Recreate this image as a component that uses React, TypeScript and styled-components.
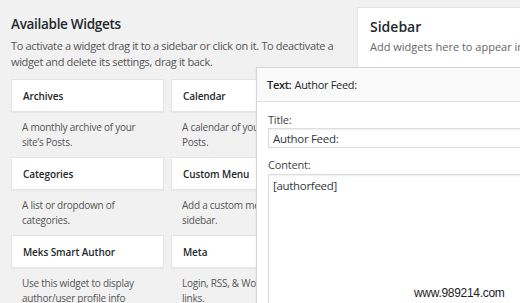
import React from "react";
import styled, { createGlobalStyle } from "styled-components";

const GlobalStyle = createGlobalStyle`
  html, body {
    margin: 0;
    padding: 0;
    background: #f1f1f1;
    font-family: "Open Sans", "Noto Sans", sans-serif;
    color: #444;
  }
  body {
    width: 520px;
    height: 303px;
    overflow: hidden;
  }
`;

const widgets = [
  { title: "Archives", desc: "A monthly archive of your site’s Posts." },
  { title: "Calendar", desc: "A calendar of your site’s Posts." },
  { title: "Categories", desc: "A list or dropdown of categories." },
  { title: "Custom Menu", desc: "Add a custom menu to your sidebar." },
  {
    title: "Meks Smart Author",
    desc: "Use this widget to display author/user profile info",
  },
  { title: "Meta", desc: "Login, RSS, & WordPress.org links." },
];

const App = () => {
  return (
    <>
      <GlobalStyle />
      <Page>
        <Available>
          <Heading>Available Widgets</Heading>
          <Intro>
            To activate a widget drag it to a sidebar or click on it. To
            deactivate a widget and delete its settings, drag it back.
          </Intro>
          <WidgetGrid>
            {widgets.map((w) => (
              <WidgetItem key={w.title}>
                <WidgetCard>{w.title}</WidgetCard>
                <WidgetDesc>{w.desc}</WidgetDesc>
              </WidgetItem>
            ))}
          </WidgetGrid>
        </Available>
        <SidebarPanel>
          <SidebarTitle>Sidebar</SidebarTitle>
          <SidebarDesc>
            Add widgets here to appear in your theme’s sidebar.
          </SidebarDesc>
        </SidebarPanel>

        <OpenWidget>
          <OpenHeader>
            <strong>Text:</strong> Author Feed:
          </OpenHeader>
          <OpenBody>
            <FieldLabel>Title:</FieldLabel>
            <TitleInput>Author Feed:</TitleInput>
            <FieldLabel $gap={10}>Content:</FieldLabel>
            <ContentArea>[authorfeed]</ContentArea>
          </OpenBody>
        </OpenWidget>

        <Watermark>www.989214.com</Watermark>
      </Page>
    </>
  );
};

const Page = styled.div`
  position: relative;
  display: flex;
  align-items: flex-start;
  gap: 33px;
  padding-left: 11px;
  width: 520px;
  height: 303px;
  overflow: hidden;
  box-sizing: border-box;
`;

const Available = styled.div`
  flex: 0 0 313px;
  padding-top: 14px;
`;

const Heading = styled.h2`
  margin: 0;
  font-size: 13.5px;
  font-weight: 600;
  letter-spacing: -0.3px;
  line-height: 20px;
  color: #23282d;
`;

const Intro = styled.p`
  margin: 4px -12px 9px 0;
  font-size: 11px;
  letter-spacing: -0.35px;
  line-height: 16px;
  color: #555;
`;

const WidgetGrid = styled.div`
  display: grid;
  grid-template-columns: 153px 153px;
  column-gap: 7px;
`;

const WidgetItem = styled.div`
  height: 78px;
`;

const WidgetCard = styled.div`
  height: 33px;
  box-sizing: border-box;
  padding: 0 11px;
  display: flex;
  align-items: center;
  background: #fff;
  border: 1px solid #e5e5e5;
  box-shadow: 0 1px 1px rgba(0, 0, 0, 0.04);
  font-size: 10px;
  font-weight: 600;
  letter-spacing: -0.1px;
  color: #23282d;
`;

const WidgetDesc = styled.div`
  padding: 8px 11px 0;
  font-size: 10px;
  letter-spacing: -0.25px;
  line-height: 14.5px;
  color: #555;
`;

const SidebarPanel = styled.div`
  margin-top: 7px;
  flex: 0 0 200px;
  height: 60px;
  box-sizing: border-box;
  padding: 9px 12px;
  background: #fff;
  border-top: 1px solid #e5e5e5;
  border-left: 1px solid #e5e5e5;
  white-space: nowrap;
`;

const SidebarTitle = styled.div`
  font-size: 14px;
  font-weight: 600;
  line-height: 20px;
  color: #23282d;
`;

const SidebarDesc = styled.div`
  margin-top: 2px;
  font-size: 11px;
  line-height: 16px;
  color: #666;
`;

const OpenWidget = styled.div`
  position: absolute;
  left: 256px;
  top: 67px;
  width: 290px;
  height: 260px;
  background: #fff;
  border: 1px solid #d5d5d5;
  box-shadow: 0 1px 2px rgba(0, 0, 0, 0.08);
`;

const OpenHeader = styled.div`
  height: 34px;
  box-sizing: border-box;
  padding: 0 10px;
  display: flex;
  align-items: center;
  gap: 3px;
  background: #fafafa;
  border-bottom: 1px solid #dfdfdf;
  font-size: 11px;
  letter-spacing: -0.3px;
  color: #23282d;
  strong {
    font-weight: 600;
  }
`;

const OpenBody = styled.div`
  padding: 11px 0 0 11px;
`;

const FieldLabel = styled.div<{ $gap?: number }>`
  margin-top: ${(p) => p.$gap ?? 0}px;
  font-size: 11px;
  letter-spacing: -0.2px;
  line-height: 14px;
  color: #444;
`;

const TitleInput = styled.div`
  margin-top: 1px;
  height: 20px;
  box-sizing: border-box;
  padding: 0 4px;
  display: flex;
  align-items: center;
  border: 1px solid #ddd;
  border-right: none;
  box-shadow: inset 0 1px 2px rgba(0, 0, 0, 0.07);
  font-size: 11.5px;
  letter-spacing: -0.3px;
  color: #32373c;
`;

const ContentArea = styled.div`
  margin-top: 2px;
  height: 200px;
  box-sizing: border-box;
  padding: 3px 4px;
  border: 1px solid #ddd;
  border-right: none;
  box-shadow: inset 0 1px 2px rgba(0, 0, 0, 0.07);
  font-size: 11.5px;
  letter-spacing: -0.3px;
  line-height: 16px;
  color: #32373c;
`;

const Watermark = styled.div`
  position: absolute;
  left: 414px;
  top: 286px;
  font-family: "Liberation Sans", Arial, sans-serif;
  font-size: 12px;
  letter-spacing: -0.3px;
  color: #222;
`;

export default App;
